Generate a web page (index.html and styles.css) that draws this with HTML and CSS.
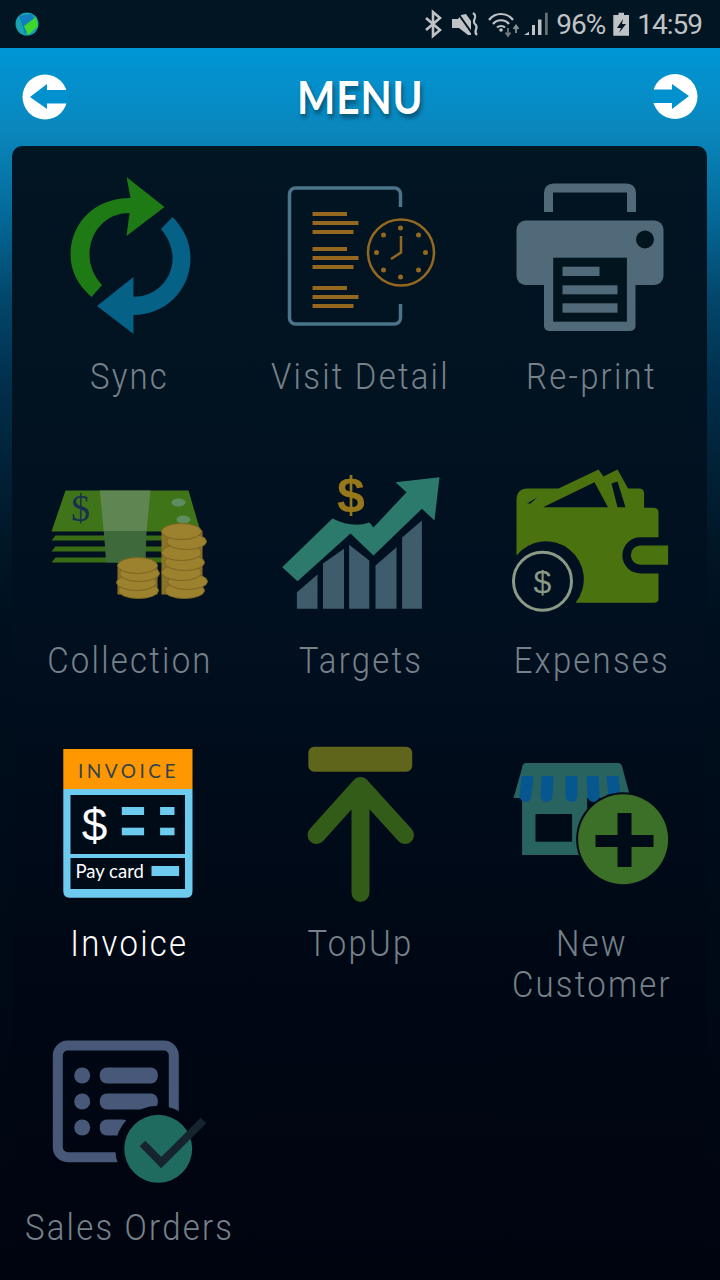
FILE: index.html
```html
<!DOCTYPE html>
<html lang="en">
<head>
    <meta charset="UTF-8">
    <meta name="viewport" content="width=device-width, initial-scale=1.0">
    <title>Menu</title>
    <link rel="stylesheet" href="styles.css">
</head>
<body>
<div class="screen">
    <div class="status-bar">
        <svg class="app-dot" width="24" height="24" viewBox="15 12 24 24">
            <circle cx="27" cy="24" r="11.5" fill="#17a3b0"/>
            <path d="M19 16 L32 14 L35 21 L25 34 Z" fill="#0f7fc0"/>
            <path d="M24 26 L36 17 L38 26 L28 35 Z" fill="#3fd82a"/>
        </svg>
        <div class="status-right">
            <svg class="sys-icons" width="124" height="48" viewBox="424 0 124 48">
                <path d="M426 18 L440 30 L433 36 V12 L440 18 L426 30" fill="none" stroke="#c0c3c5" stroke-width="2.6"/>
                <path d="M452 19 H458 L461 15 L466 14 L471 21 V35 L468 35 L459 28 H452 Z" fill="#c0c3c5"/>
                <path d="M457 12 L474 36" stroke="#011522" stroke-width="2"/>
                <path d="M473 13 C479 17 471 20 475 24 C480 28 472 31 477 35" fill="none" stroke="#c0c3c5" stroke-width="2.2"/>
                <g fill="none" stroke="#c0c3c5" stroke-width="2.2">
                    <path d="M489 20 C495 12 507 12 513 20"/>
                    <path d="M493 24 C497 19 505 19 509 24"/>
                    <path d="M497 27.500 C499 25.500 503 25.500 505 27.500"/>
                </g>
                <circle cx="501" cy="30" r="1.800" fill="#c0c3c5"/>
                <path d="M508 28 V35 M505.500 32.500 L508 36 L510.500 32.500" fill="none" stroke="#6f777c" stroke-width="1.800"/>
                <path d="M516 33 V26 M513.500 29 L516 25.500 L518.500 29" fill="none" stroke="#8b9195" stroke-width="1.800"/>
                <path d="M524 35 L529 31.700 V35 Z M532 25 H535 V35 H532 Z M538 19.500 H541.500 V35 H538 Z" fill="#c0c3c5"/>
                <rect x="545" y="12.700" width="2.700" height="22.300" fill="#687176"/>
            </svg>
            <span class="status-text">96%</span>
            <svg width="16" height="48" viewBox="612 0 16 48">
                <path d="M612.300 15 H617.500 V12.700 H623 V15 H628 V35.700 H612.300 Z" fill="#c0c3c5"/>
                <path d="M622 19 L616 28 H620 L618 33 L625 24 H621 Z" fill="#011522"/>
            </svg>
            <span class="status-text">14:59</span>
        </div>
    </div>

    <div class="header">
        <svg width="46" height="46" viewBox="22 75 46 46">
            <circle cx="45" cy="98" r="22.500" fill="#fff"/>
            <path d="M30 98 L47 85 V91 H68 V104.500 H47 V110 Z" fill="#0091ce"/>
        </svg>
        <h1 class="title">MENU</h1>
        <svg width="46" height="46" viewBox="653 75 46 46">
            <circle cx="676" cy="97.500" r="22.500" fill="#fff"/>
            <path d="M690 97 L673 85 V90.500 H652 V104 H673 V110 Z" fill="#0091ce"/>
        </svg>
    </div>

    <div class="panel">
        <div class="menu-grid">
            <div class="menu-item">
                <svg class="menu-icon" viewBox="47.500 174 164 164">
                    <path d="M126 177 L164 207 L126 236 L129 213 C105 213 89 232 89 255 C89 266 94 277 101.500 285 L91 297 C77 285 70 270 70 255 C70 222 95 198 130 198 Z" fill="#1e7a15"/>
                    <path d="M172 217 C183 228 190 242 190 258 C190 290 165 315 133 315 L133 334 L96.500 306 L133 277 L133 296.700 C155 297 172 280 172 258 C172 248 168 238 160.500 229 Z" fill="#056186"/>
                </svg>
                <span class="menu-label">Sync</span>
            </div>
            <div class="menu-item">
                <svg class="menu-icon" viewBox="278.500 174 164 164">
                    <path d="M400 207 V194 A6 6 0 0 0 394 188 H295 A6 6 0 0 0 289 194 V318 A6 6 0 0 0 295 324 H394 A6 6 0 0 0 400 318 V304" fill="none" stroke="#4a7488" stroke-width="3.500"/>
                    <g fill="#94681e">
                        <rect x="312" y="212" width="34.500" height="4"/>
                        <rect x="312" y="221" width="46" height="4"/>
                        <rect x="312" y="230" width="41" height="4"/>
                        <rect x="312" y="247" width="34.500" height="4"/>
                        <rect x="312" y="256" width="46" height="4"/>
                        <rect x="312" y="265" width="41" height="4"/>
                        <rect x="312" y="286" width="34.500" height="4"/>
                        <rect x="312" y="295" width="46" height="4"/>
                        <rect x="312" y="304" width="41" height="4"/>
                        <circle cx="400" cy="228" r="2.500"/>
                        <circle cx="400" cy="277" r="2.500"/>
                        <circle cx="376" cy="252.500" r="2.500"/>
                        <circle cx="425" cy="252.500" r="2.500"/>
                        <circle cx="383" cy="235" r="2.500"/>
                        <circle cx="418" cy="235" r="2.500"/>
                        <circle cx="383" cy="270" r="2.500"/>
                        <circle cx="418" cy="270" r="2.500"/>
                    </g>
                    <circle cx="400.500" cy="252.500" r="33" fill="none" stroke="#94681e" stroke-width="2.500"/>
                    <path d="M400.500 236 V252.500 L390.500 259" fill="none" stroke="#94681e" stroke-width="2.500"/>
                </svg>
                <span class="menu-label">Visit Detail</span>
            </div>
            <div class="menu-item">
                <svg class="menu-icon" viewBox="509.500 174 164 164">
                    <path d="M548 212 V193 Q548 188 553 188 H626 Q631 188 631 193 V212" fill="none" stroke="#506a7a" stroke-width="9"/>
                    <rect x="516" y="220.500" width="147" height="64.500" rx="9" fill="#506a7a"/>
                    <rect x="543.500" y="250" width="91.500" height="81" rx="5" fill="#506a7a"/>
                    <circle cx="644.500" cy="239.500" r="9" fill="#02151f"/>
                    <rect x="552.700" y="257.700" width="73.700" height="64" fill="#02151f"/>
                    <g fill="#506a7a">
                        <rect x="562" y="266.700" width="37" height="9.300"/>
                        <rect x="562" y="285.300" width="55" height="9"/>
                        <rect x="562" y="303.300" width="55" height="9.400"/>
                    </g>
                </svg>
                <span class="menu-label">Re-print</span>
            </div>

            <div class="menu-item">
                <svg class="menu-icon" viewBox="47.500 457.500 164 164">
                    <path d="M65 490 H188 L200 531 H51 Z" fill="#3f7518"/>
                    <path d="M55 535 H165 V540 H51 Z M55 546 H165 V551 H51 Z M55 557 H165 V562 H51 Z" fill="#3a6c16"/>
                    <path d="M99.300 490 H150 L146 531 H103.300 Z" fill="#5f8652"/>
                    <path d="M103.300 531 H146 L145 562 H105.700 Z" fill="#3e6a3b"/>
                    <text x="80" y="520" class="money-sign">$</text>
                    <ellipse cx="178" cy="502" rx="7" ry="4" fill="#5f8d60"/>
                    <ellipse cx="183" cy="519" rx="7" ry="4" fill="#5f8d60"/>
                    <rect x="161" y="530" width="41" height="64" fill="#8a7226"/>
                    <rect x="117" y="565" width="40" height="29" fill="#8a7226"/>
                    <g fill="#9c812e" stroke="#7d6520">
                        <ellipse cx="184" cy="590" rx="20" ry="8"/>
                        <ellipse cx="187" cy="581" rx="20" ry="8"/>
                        <ellipse cx="181" cy="572" rx="20" ry="8"/>
                        <ellipse cx="184" cy="562" rx="20" ry="8"/>
                        <ellipse cx="181" cy="552" rx="20" ry="8"/>
                        <ellipse cx="186" cy="541" rx="20" ry="8"/>
                        <ellipse cx="181" cy="531" rx="20" ry="8"/>
                        <ellipse cx="138" cy="590" rx="20" ry="8"/>
                        <ellipse cx="136" cy="582" rx="20" ry="8"/>
                        <ellipse cx="139" cy="573" rx="20" ry="8"/>
                        <ellipse cx="137" cy="565" rx="20" ry="8"/>
                    </g>
                </svg>
                <span class="menu-label">Collection</span>
            </div>
            <div class="menu-item">
                <svg class="menu-icon" viewBox="278.500 457.500 164 164">
                    <text x="350.500" y="511" class="chart-sign">$</text>
                    <path d="M281.700 566.700 L332 518 Q352 528 369 522 L373 527 L406 491.700 L395 481.700 L439 476.700 L434 520 L421.400 508.300 L373 555 L350 533 L297 580.700 Z" fill="#2b7a6c"/>
                    <g fill="#3f5c6c">
                        <path d="M296.400 591.700 L317 574 V608.300 H296.400 Z"/>
                        <path d="M322.500 563 L343.500 548.300 V608.300 H322.500 Z"/>
                        <path d="M348.600 544.300 L368.800 560 V608.300 H348.600 Z"/>
                        <path d="M375 565 L396 546.700 V608.300 H375 Z"/>
                        <path d="M401.600 537 L421.400 520 V608.300 H401.600 Z"/>
                    </g>
                </svg>
                <span class="menu-label">Targets</span>
            </div>
            <div class="menu-item">
                <svg class="menu-icon" viewBox="509.500 457.500 164 164">
                    <path d="M516 500 Q516 488 527 488 H558 L598 469 L603 476 L617 469 L627.600 488 H638 Q643.600 488 643.600 493 V507.300 H653 Q658 507.300 658 512 V536.700 H640 A18 18 0 0 0 640 573 H658 V598 Q658 602.300 653 602.300 H575 A33 33 0 0 0 516 555 Z" fill="#4a7310"/>
                    <path d="M542.600 506.700 L594 481.700 L607.500 506.700 Z M611 483 L617 481 L625 506.700 H617 Z M526.600 503 L537 496.700 L530 503 Z" fill="#011020"/>
                    <path d="M640 545 H667.600 V564.300 H640 A9.650 9.650 0 0 1 640 545 Z" fill="#4a7310"/>
                    <circle cx="542" cy="580.700" r="29" fill="#011020" stroke="#8a9a85" stroke-width="3"/>
                    <text x="542" y="592" class="coin-sign">$</text>
                </svg>
                <span class="menu-label">Expenses</span>
            </div>

            <div class="menu-item">
                <svg class="menu-icon" viewBox="47.500 741 164 164">
                    <path d="M62.800 789 H192 V891 Q192 897.700 186 897.700 H69 Q62.800 897.700 62.800 891 Z" fill="#6ecbf0"/>
                    <rect x="62.800" y="749" width="129.200" height="40" fill="#ff9800"/>
                    <text x="128" y="777.500" class="invoice-head">INVOICE</text>
                    <rect x="70" y="795" width="114.500" height="59" fill="#000b18"/>
                    <rect x="70" y="858" width="114.500" height="31" fill="#000b18"/>
                    <text x="94" y="841" class="invoice-sign">$</text>
                    <g fill="#6ecbf0">
                        <rect x="121.300" y="807" width="22.300" height="8"/>
                        <rect x="159.600" y="807" width="14.400" height="8"/>
                        <rect x="121.300" y="827.700" width="22.300" height="7.600"/>
                        <rect x="159.600" y="827.700" width="14.400" height="7.600"/>
                        <rect x="151" y="866" width="27.600" height="10"/>
                    </g>
                    <text x="75" y="878" class="invoice-pay">Pay card</text>
                </svg>
                <span class="menu-label menu-label-active">Invoice</span>
            </div>
            <div class="menu-item">
                <svg class="menu-icon" viewBox="278.500 741 164 164">
                    <rect x="307.800" y="746.700" width="103.900" height="25" rx="6" fill="#5f651a"/>
                    <path d="M316 835 L360 786 L404.500 835 M360 790 V893" fill="none" stroke="#335c19" stroke-width="18" stroke-linecap="round" stroke-linejoin="round"/>
                </svg>
                <span class="menu-label">TopUp</span>
            </div>
            <div class="menu-item">
                <svg class="menu-icon" viewBox="509.500 741 164 164">
                    <path d="M521.600 768 Q521.600 763 526 763 H617 Q621.400 763 622 768 L630 798 H513 Z" fill="#29635f"/>
                    <rect x="521.600" y="796" width="65" height="59" fill="#29635f"/>
                    <g fill="#06568f">
                        <path d="M521 776 H533 L531 796 A6 6 0 0 1 519 796 Z"/>
                        <path d="M541 776 H553 L552 796 A6 6 0 0 1 540 796 Z"/>
                        <path d="M565 776 H577 V796 A6 6 0 0 1 565 796 Z"/>
                        <path d="M586 776 H598 L599 796 A6 6 0 0 1 587 796 Z"/>
                        <path d="M606 776 H618 L620 796 A6 6 0 0 1 608 796 Z"/>
                    </g>
                    <rect x="535" y="814" width="36.600" height="27.700" fill="#000b18"/>
                    <circle cx="622.600" cy="839.300" r="47" fill="#000b18"/>
                    <circle cx="622.600" cy="839.300" r="45" fill="#3c7028"/>
                    <path d="M617 813 H631 V835 H653 V847 H631 V867 H617 V847 H595 V835 H617 Z" fill="#000b18"/>
                </svg>
                <span class="menu-label">New<br>Customer</span>
            </div>

            <div class="menu-item">
                <svg class="menu-icon" viewBox="47.500 1024.500 164 164">
                    <rect x="57.300" y="1045" width="116" height="111.700" rx="10" fill="none" stroke="#475878" stroke-width="10"/>
                    <g fill="#475878">
                        <circle cx="81.700" cy="1075" r="8"/>
                        <circle cx="81.700" cy="1101" r="8"/>
                        <circle cx="81.700" cy="1127" r="8"/>
                        <rect x="99.300" y="1067" width="58" height="16" rx="7"/>
                        <rect x="99.300" y="1093" width="58" height="16" rx="7"/>
                        <rect x="99.300" y="1119" width="30" height="16" rx="7"/>
                    </g>
                    <circle cx="157.700" cy="1148.300" r="43" fill="#00050f"/>
                    <circle cx="157.700" cy="1148.300" r="34" fill="#1f6b5f"/>
                    <path d="M142 1143 L160.700 1162 L203 1120" fill="none" stroke="#16242f" stroke-width="8"/>
                </svg>
                <span class="menu-label">Sales Orders</span>
            </div>
        </div>
    </div>
</div>
</body>
</html>
```

FILE: styles.css
```css
body {
    margin: 0;
    padding: 0;
    background-color: #00040f;
    font-family: Roboto, Arial, sans-serif;
}

.screen {
    width: 720px;
    height: 1280px;
    overflow: hidden;
    display: flex;
    flex-direction: column;
    background: linear-gradient(#0096d6 48px, #0a87bd 130px, #046a9a 213px, #02476b 297px, #01304d 380px, #012238 463px, #011626 547px, #000f1e 630px, #00040f 1280px);
}

.status-bar {
    height: 48px;
    flex-shrink: 0;
    background-color: #011522;
    display: flex;
    justify-content: space-between;
    align-items: center;
    padding: 0 18px 0 15px;
}

.status-right {
    display: flex;
    align-items: center;
    gap: 8px;
}

.status-text {
    font-size: 28px;
    letter-spacing: -1px;
    color: #c0c3c5;
}

.header {
    height: 98px;
    flex-shrink: 0;
    display: flex;
    justify-content: space-between;
    align-items: center;
    padding: 0 22px;
}

.title {
    margin: 0;
    font-family: Lato, Arial, sans-serif;
    font-size: 45px;
    font-weight: 700;
    letter-spacing: 1px;
    color: #fff;
    text-shadow: 2px 4px 5px rgba(0, 0, 0, 0.4);
    transform: scaleX(0.9);
}

.panel {
    flex: 1;
    margin: 0 13px 0 12px;
    padding: 28px 0 0 2px;
    border-radius: 10px 10px 0 0;
    background: linear-gradient(#021522, #011020 40%, #000815 70%, #00040f);
}

.menu-grid {
    display: grid;
    grid-template-columns: repeat(3, 231px);
    grid-template-rows: repeat(3, 283.5px) auto;
}

.menu-item {
    display: flex;
    flex-direction: column;
    align-items: center;
}

.menu-icon {
    width: 164px;
    height: 164px;
    flex-shrink: 0;
    overflow: visible;
}

.menu-label {
    margin-top: 18px;
    font-family: Roboto, sans-serif;
    font-size: 37px;
    font-weight: 300;
    line-height: 41px;
    letter-spacing: 2.5px;
    text-align: center;
    white-space: nowrap;
    color: #76818a;
    transform: scaleX(0.89);
}

.menu-label-active {
    color: #fff;
}

.money-sign {
    font-family: "Liberation Serif", serif;
    font-size: 38px;
    fill: #1a2f4f;
    text-anchor: middle;
}

.chart-sign {
    font-family: "Liberation Sans", sans-serif;
    font-size: 50px;
    font-weight: 700;
    fill: #96781a;
    text-anchor: middle;
}

.coin-sign {
    font-family: "Liberation Sans", sans-serif;
    font-size: 32px;
    fill: #8a9a85;
    text-anchor: middle;
}

.invoice-head {
    font-family: Lato, sans-serif;
    font-size: 19px;
    letter-spacing: 3.5px;
    fill: #2f4350;
    text-anchor: middle;
}

.invoice-sign {
    font-family: "Liberation Sans", sans-serif;
    font-size: 46px;
    fill: #fff;
    text-anchor: middle;
}

.invoice-pay {
    font-family: Lato, sans-serif;
    font-size: 18.5px;
    fill: #fff;
}
```
